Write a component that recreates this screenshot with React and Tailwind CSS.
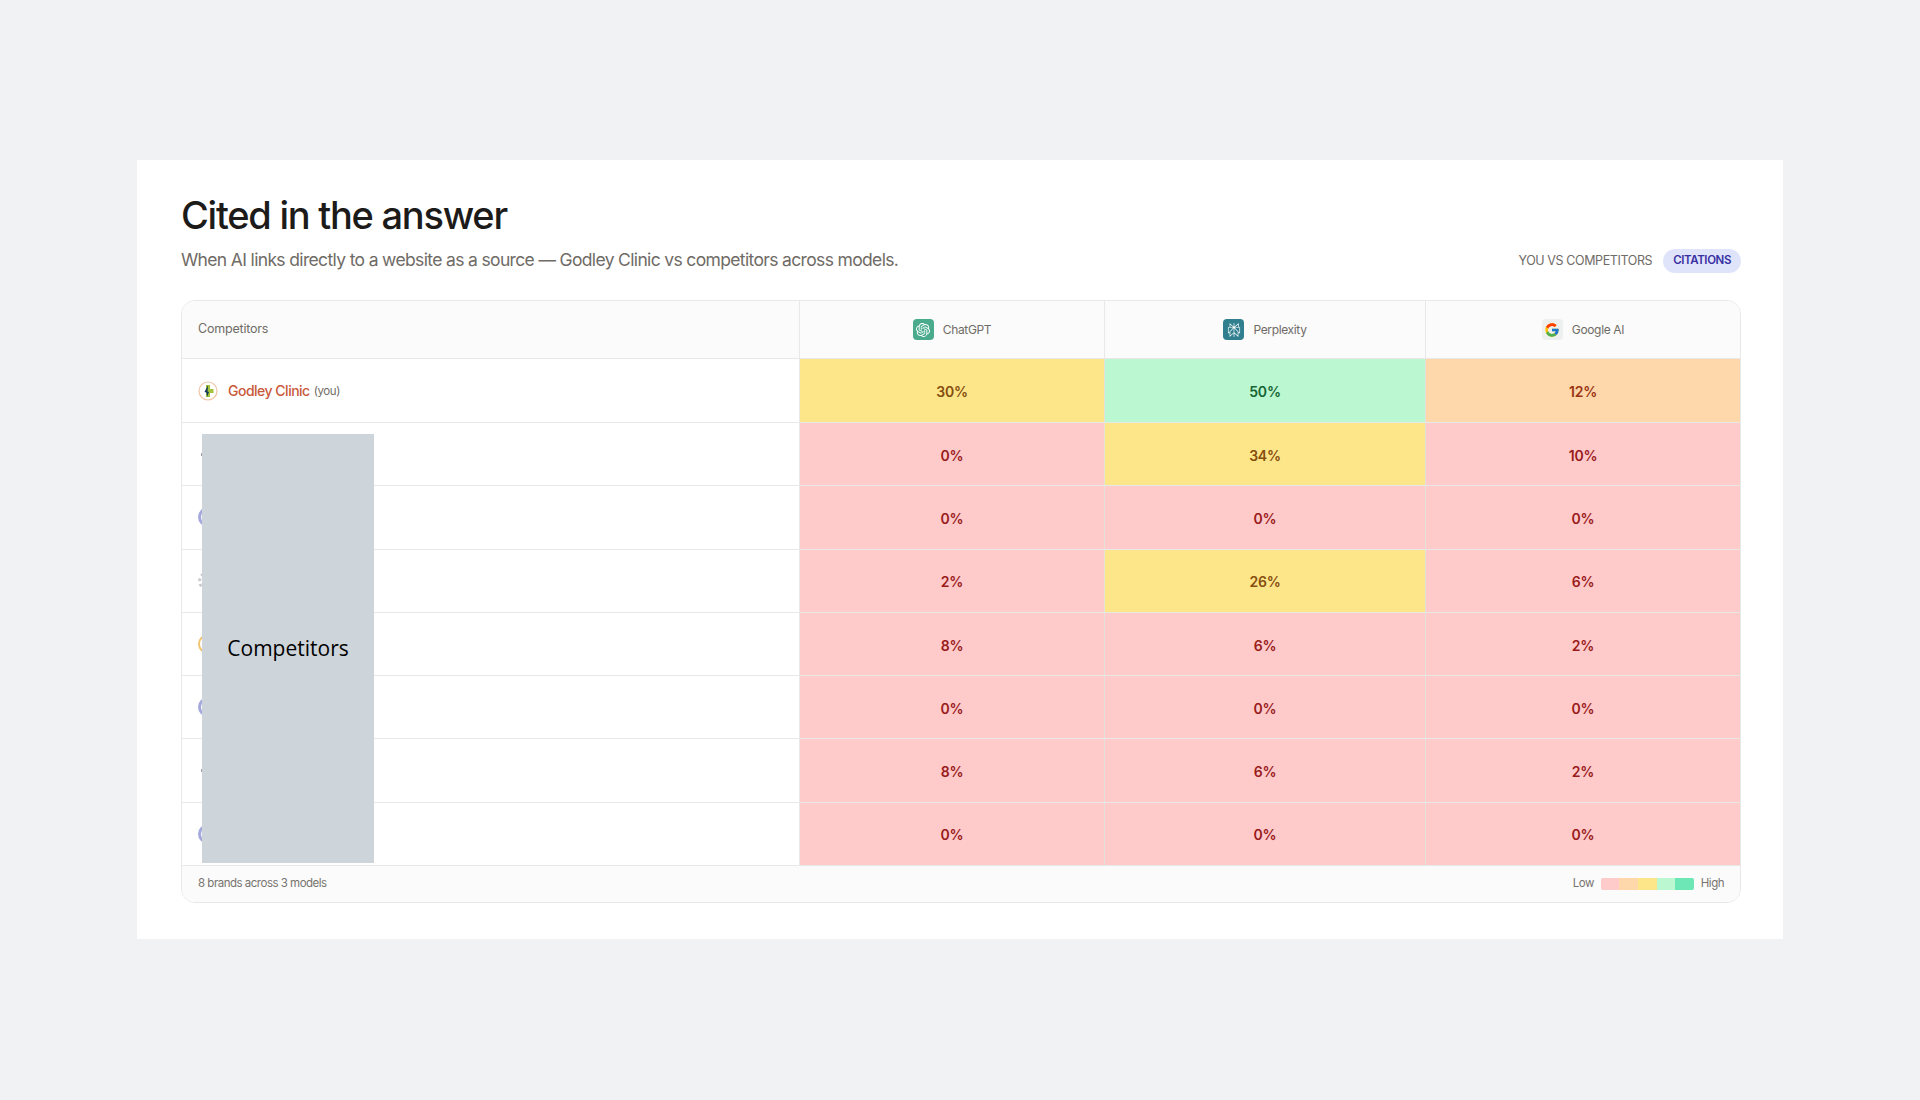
import React from "react";
import { SiOpenai, SiPerplexity } from "react-icons/si";
import { FcGoogle } from "react-icons/fc";

const tones = {
  red: "bg-[#fecaca] text-[#991b1b]",
  orange: "bg-[#fed7aa] text-[#9a3412]",
  yellow: "bg-[#fde68a] text-[#854d0e]",
  green: "bg-[#bbf7d0] text-[#166534]",
};

const toneFor = (v) => {
  if (v >= 40) return "green";
  if (v >= 20) return "yellow";
  if (v >= 12) return "orange";
  return "red";
};

const rows = [
  { icon: "godley", values: [30, 50, 12], h: "h-[64px]" },
  { icon: "dark", values: [0, 34, 10] },
  { icon: "purple", values: [0, 0, 0] },
  { icon: "dots", values: [2, 26, 6] },
  { icon: "amber", values: [8, 6, 2] },
  { icon: "purple", values: [0, 0, 0] },
  { icon: "dark", values: [8, 6, 2] },
  { icon: "purple", values: [0, 0, 0] },
];

const GodleyLogo = () => (
  <svg width="20" height="20" viewBox="0 0 20 20">
    <circle cx="10" cy="10" r="9" fill="#fff" stroke="#f0c3a4" strokeWidth="1.2" />
    <path d="M8 4h4v4h3.5v4H12v4H8z" fill="#a3c43a" />
    <path d="M10 4 6.5 11l2 .5L9 16l2-5-1.5-.5z" fill="#12355b" />
  </svg>
);

const RowIcon = ({ type }) => {
  if (type === "godley") return <GodleyLogo />;
  if (type === "purple") return <div className="w-5 h-5 rounded-full border-[3px] border-[#a5a8dc]"></div>;
  if (type === "amber") return <div className="w-5 h-5 rounded-full border-[2px] border-[#f2c46d]"></div>;
  if (type === "dots") return <div className="w-5 h-5 rounded-full border-[3px] border-dotted border-[#c9cbd1]"></div>;
  return (
    <div className="w-5 h-5 flex items-center">
      <div className="ml-[3px] w-[1px] h-[3px] bg-[#9a9ea6]"></div>
    </div>
  );
};

const ModelHead = ({ label, iconBox, children, border }) => (
  <div className={`flex items-center justify-center gap-[9px] ${border}`}>
    <div className={`w-[21px] h-[21px] rounded-[4px] flex items-center justify-center ${iconBox}`}>
      {children}
    </div>
    <span className="text-[12px] tracking-[-0.35px] text-[#6f6b66]">{label}</span>
  </div>
);

const App = () => {
  return (
    <div className="min-h-[1100px] bg-[#f1f2f4] pt-[160px] px-[137px] font-['Inter',sans-serif]">
      <div className="bg-white h-[779px] pl-[44px] pr-[42px] pt-[32px]">
        <h1 className="text-[38px] leading-[46px] font-medium tracking-[-1.25px] text-[#1c1b1a]">
          Cited in the answer
        </h1>
        <div className="flex justify-between items-center mt-[9px]">
          <p className="text-[17.5px] leading-[26px] tracking-[-0.65px] text-[#6f6b66]">
            When AI links directly to a website as a source — Godley Clinic vs competitors across models.
          </p>
          <div className="flex items-center gap-[11px] mt-[2px]">
            <span className="text-[12.5px] tracking-[-0.4px] text-[#6f6b66]">YOU VS COMPETITORS</span>
            <span className="bg-[#e0e4fb] text-[#3730a3] text-[11.5px] tracking-[-0.4px] font-semibold rounded-full px-[10px] h-[24px] flex items-center">
              CITATIONS
            </span>
          </div>
        </div>

        <div className="relative mt-[27px] border border-[#e8e8e6] rounded-[14px] overflow-hidden">
          <div className="grid grid-cols-[618px_305px_321px_1fr] h-[58px] bg-[#fbfbfb] border-b border-[#e8e8e6]">
            <div className="flex items-center pl-[16px] text-[12.5px] tracking-[-0.2px] text-[#6f6b66] border-r border-[#e8e8e6]">
              Competitors
            </div>
            <ModelHead label="ChatGPT" iconBox="bg-[#4aab8c]" border="border-r border-[#e8e8e6]">
              <SiOpenai className="text-white" size={14} />
            </ModelHead>
            <ModelHead label="Perplexity" iconBox="bg-[#2f7f8f]" border="border-r border-[#e8e8e6]">
              <SiPerplexity className="text-white" size={14} />
            </ModelHead>
            <ModelHead label="Google AI" iconBox="bg-[#edf0ef]" border="">
              <FcGoogle size={16} />
            </ModelHead>
          </div>

          {rows.map((row, i) => (
            <div
              key={i}
              className={`grid grid-cols-[618px_305px_321px_1fr] border-b border-[#e8e8e6] ${row.h || "h-[63.3px]"}`}
            >
              <div className="flex items-center gap-[10px] pl-[16px] border-r border-[#e8e8e6]">
                <RowIcon type={row.icon} />
                {i === 0 && (
                  <>
                    <span className="text-[14px] tracking-[-0.5px] font-medium text-[#c8593a]">Godley Clinic</span>
                    <span className="text-[11.5px] tracking-[-0.4px] text-[#6f6b66] -ml-[6px] mt-[2px]">(you)</span>
                  </>
                )}
              </div>
              {row.values.map((v, j) => (
                <div
                  key={j}
                  className={`flex items-center justify-center pt-[2px] text-[14px] font-semibold tracking-[-0.2px] ${tones[toneFor(v)]} ${j < 2 ? "border-r border-[#e5e1d8]" : ""}`}
                >
                  {v}%
                </div>
              ))}
            </div>
          ))}

          <div className="flex justify-between items-center h-[36px] bg-[#fbfbfb] px-[16px] text-[11.5px] tracking-[-0.5px] text-[#77736e]">
            <span>8 brands across 3 models</span>
            <div className="flex items-center gap-[7px]">
              <span>Low</span>
              <div className="flex w-[93px] h-[12px] rounded-[2px] overflow-hidden">
                <div className="flex-1 bg-[#fecaca]"></div>
                <div className="flex-1 bg-[#fed7aa]"></div>
                <div className="flex-1 bg-[#fde68a]"></div>
                <div className="flex-1 bg-[#bbf7d0]"></div>
                <div className="flex-1 bg-[#6ee7b7]"></div>
              </div>
              <span>High</span>
            </div>
          </div>

          <div className="absolute left-[20px] top-[133px] w-[172px] h-[429px] bg-[#ced5da] flex items-center justify-center text-[21px] text-black font-['Open_Sans',sans-serif]">
            Competitors
          </div>
        </div>
      </div>
    </div>
  );
};

export default App;
